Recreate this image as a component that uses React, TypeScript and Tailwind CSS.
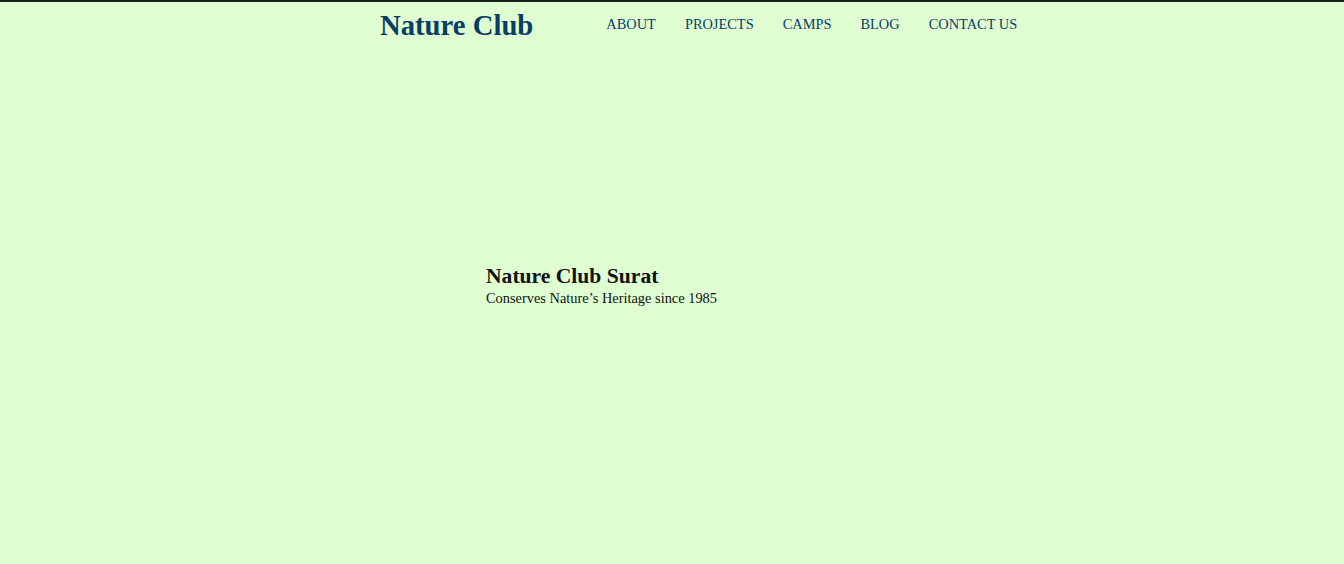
const navLinks = ['ABOUT', 'PROJECTS', 'CAMPS', 'BLOG', 'CONTACT US'];

export default function App() {
  return (
    <div className="min-h-[564px] bg-[#dfffd3] border-t-2 border-[#1c1f1c] font-['Liberation_Serif','Times_New_Roman',serif]">
      {/* Header */}
      <header className="flex items-center pt-[8px] pl-[380px]">
        <h1 className="text-[28.7px] leading-[31px] font-bold text-[#0a3d62]">Nature Club</h1>
        <nav className="ml-[73px] mb-[4px] flex items-center gap-[29px]">
          {navLinks.map((link) => (
            <a key={link} href="#" className="text-[14.4px] leading-[16px] text-[#0a3d62]">
              {link}
            </a>
          ))}
        </nav>
      </header>

      {/* Hero */}
      <section className="mt-[222px] pl-[486px] text-[#111]">
        <h2 className="text-[21.6px] leading-[26px] font-bold">Nature Club Surat</h2>
        <p className="text-[14.4px] leading-[18px]">Conserves Nature’s Heritage since 1985</p>
      </section>
    </div>
  );
}
